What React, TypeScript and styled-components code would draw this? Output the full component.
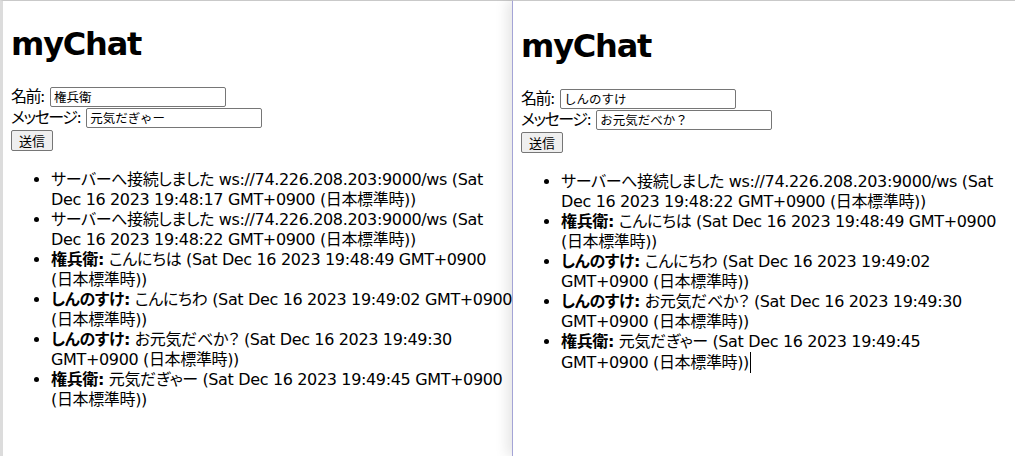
import styled, { createGlobalStyle } from "styled-components";

type ChatLine = {
  name?: string;
  text: string;
  at: string;
};

const JST = "GMT+0900 (日本標準時)";
const SERVER = "サーバーへ接続しました ws://74.226.208.203:9000/ws";

const connected1: ChatLine = { text: SERVER, at: `Sat Dec 16 2023 19:48:17 ${JST}` };
const connected2: ChatLine = { text: SERVER, at: `Sat Dec 16 2023 19:48:22 ${JST}` };
const talk: ChatLine[] = [
  { name: "権兵衛", text: "こんにちは", at: `Sat Dec 16 2023 19:48:49 ${JST}` },
  { name: "しんのすけ", text: "こんにちわ", at: `Sat Dec 16 2023 19:49:02 ${JST}` },
  { name: "しんのすけ", text: "お元気だべか？", at: `Sat Dec 16 2023 19:49:30 ${JST}` },
  { name: "権兵衛", text: "元気だぎゃー", at: `Sat Dec 16 2023 19:49:45 ${JST}` },
];

type ChatWindowProps = {
  side: "left" | "right";
  userName: string;
  message: string;
  lines: ChatLine[];
  caret?: boolean;
};

const ChatWindow = (props: ChatWindowProps) => {
  const { side, userName, message, lines, caret } = props;
  return (
    <Frame side={side}>
      <Page side={side}>
        <Title>myChat</Title>
        <Row>
          <Label>名前:</Label>
          <TextBox value={userName} readOnly width={176} />
        </Row>
        <Row>
          <Label>メッセージ:</Label>
          <TextBox value={message} readOnly width={176} />
        </Row>
        <SendButton type="button">送信</SendButton>
        <MessageList>
          {lines.map((l, i) => (
            <li key={i}>
              {l.name && <Name>{l.name}:</Name>}
              {l.name ? " " : ""}
              {l.text} ({l.at})
              {caret && i === lines.length - 1 && <Caret />}
            </li>
          ))}
        </MessageList>
      </Page>
    </Frame>
  );
};

export default function App() {
  return (
    <>
      <GlobalStyle />
      <Desktop>
        <ChatWindow
          side="left"
          userName="権兵衛"
          message="元気だぎゃー"
          lines={[connected1, connected2, ...talk]}
        />
        <ChatWindow
          side="right"
          userName="しんのすけ"
          message="お元気だべか？"
          lines={[connected2, ...talk]}
          caret
        />
      </Desktop>
    </>
  );
}

const GlobalStyle = createGlobalStyle`
  html, body {
    margin: 0;
    background: #fff;
  }
  body {
    font-family: "DejaVu Sans", "Noto Sans CJK JP", sans-serif;
    font-feature-settings: "palt";
    color: #000;
  }
`;

const Desktop = styled.div`
  display: flex;
  width: 1015px;
  height: 456px;
  overflow: hidden;
  background: #fff;
`;

type SideProps = { side: "left" | "right" };

const Frame = styled.div<SideProps>`
  flex: none;
  width: ${(p) => (p.side === "left" ? "512px" : "503px")};
  height: 456px;
  box-sizing: border-box;
  overflow: hidden;
  background: #fff;
  border-top: 1px solid #c9c9c9;
  border-left: ${(p) =>
    p.side === "left" ? "3px solid #dcdcdc" : "1px solid #a4a4d6"};
  position: relative;
  z-index: ${(p) => (p.side === "left" ? 0 : 1)};
  box-shadow: ${(p) =>
    p.side === "left" ? "none" : "-5px 0 12px rgba(0, 0, 0, 0.1)"};
`;

const Page = styled.div<SideProps>`
  width: ${(p) => (p.side === "left" ? "504px" : "486px")};
  padding: ${(p) => (p.side === "left" ? "8px" : "10px 8px 8px")};
  font-size: 16px;
  line-height: 20px;
  letter-spacing: -0.35px;
`;

const Title = styled.h1`
  font-size: 32px;
  line-height: 38px;
  font-weight: bold;
  letter-spacing: -1.2px;
  margin: 16px 0 23px;
`;

const Row = styled.div`
  display: flex;
  align-items: center;
  height: 21px;
  gap: 6px;
`;

const Label = styled.span`
  font-size: 16px;
  letter-spacing: -1.5px;
`;

const TextBox = styled.input<{ width: number }>`
  width: ${(p) => p.width}px;
  height: 20px;
  box-sizing: border-box;
  margin: 0;
  padding: 1px 3px;
  border: 1px solid #767676;
  border-radius: 2px;
  font-family: "Noto Sans CJK JP", sans-serif;
  font-size: 12.5px;
  color: #000;
  background: #fff;
  outline: none;
`;

const SendButton = styled.button`
  display: block;
  margin: 2px 0 0;
  width: 42px;
  height: 21px;
  padding: 0;
  border: 1px solid #767676;
  border-radius: 2px;
  background: #efefef;
  font-family: "Noto Sans CJK JP", sans-serif;
  font-size: 13px;
  line-height: 19px;
  color: #000;
`;

const MessageList = styled.ul`
  margin: 19px 0 0;
  padding-left: 40px;

  li {
    line-height: 20px;
    word-break: keep-all;
  }
`;

const Name = styled.b`
  font-weight: bold;
`;

const Caret = styled.span`
  display: inline-block;
  width: 1px;
  height: 21px;
  margin-left: 1px;
  vertical-align: -5px;
  background: #000;
`;
